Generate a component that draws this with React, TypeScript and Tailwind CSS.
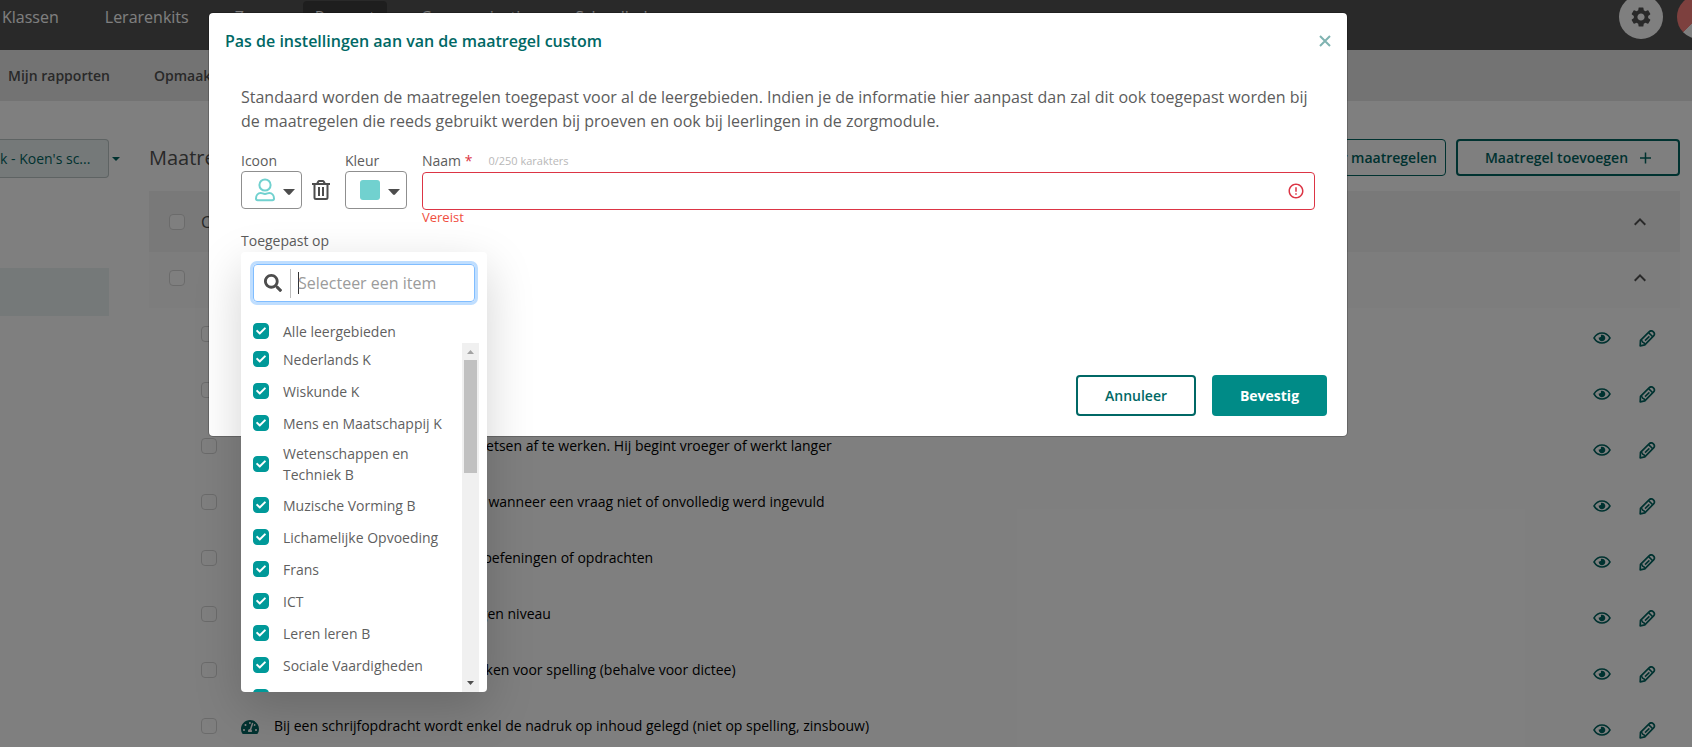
import { useState } from 'react'
import { FaCheck, FaSearch, FaTachometerAlt } from 'react-icons/fa'
import { MdErrorOutline, MdKeyboardArrowUp, MdSettings } from 'react-icons/md'

const navItems = ['Klassen', 'Lerarenkits', 'Zorg', 'Rapport', 'Communicatie', 'Schoolbeheer']

const measures = [
  'De leerling krijgt extra uitleg bij de opdracht',
  'De leerling mag hulpmiddelen gebruiken',
  'Zij krijgt extra tijd om taken of toetsen af te werken. Hij begint vroeger of werkt langer',
  'De leerling wordt er op gewezen wanneer een vraag niet of onvolledig werd ingevuld',
  'Een leerling krijgt minder zware oefeningen of opdrachten',
  'Een leerling werkt volledig op eigen niveau',
  'Er worden geen punten afgetrokken voor spelling (behalve voor dictee)',
  'Bij een schrijfopdracht wordt enkel de nadruk op inhoud gelegd (niet op spelling, zinsbouw)',
]

const subjects = [
  'Nederlands K',
  'Wiskunde K',
  'Mens en Maatschappij K',
  'Wetenschappen en Techniek B',
  'Muzische Vorming B',
  'Lichamelijke Opvoeding',
  'Frans',
  'ICT',
  'Leren leren B',
  'Sociale Vaardigheden',
  'Godsdienst',
]

function EyeIcon() {
  return (
    <svg width="18" height="12" viewBox="0 0 18 12" fill="none">
      <path d="M1 6C3 2.6 5.8 1 9 1s6 1.6 8 5c-2 3.4-4.8 5-8 5S3 9.4 1 6z" stroke="currentColor" strokeWidth="1.5" />
      <path d="M9 2.7a3.3 3.3 0 1 1-3.2 2.5c.9.5 2 .1 2.2-.9.1-.6 0-1.1-.3-1.3.4-.2.8-.3 1.3-.3z" fill="currentColor" />
    </svg>
  )
}

function PencilIcon() {
  return (
    <svg width="17" height="17" viewBox="0 0 17 17" fill="none" stroke="currentColor" strokeLinejoin="round">
      <path d="M1.2 15.8l.3-5.4 8.8-8.800c1.400-1.100 2.800-1.100 4.100.2s1.300 2.800.2 4.100l-8.800 8.900z" strokeWidth="1.7" />
      <path d="M9.600 2.600l4.400 4.400M2 10.600c1 .2 1.600.6 1.700 1.700 1.100.1 1.900.8 2.100 2M6 10.600l4.400-4.200" strokeWidth="1.5" />
    </svg>
  )
}

function UserIcon() {
  return (
    <svg width="20" height="24" viewBox="0 0 20 24" fill="none" stroke="#71d1cf" strokeWidth="2">
      <circle cx="10" cy="7" r="5.6" />
      <path d="M1 20.5c0-3 2-5.5 4.700-5.500 1.500 0 2.400.9 4.300.9s2.800-.9 4.300-.9C17 15 19 17.500 19 20.500c0 1-.7 1.700-1.700 1.700H2.700c-1 0-1.700-.7-1.700-1.700z" />
    </svg>
  )
}

function TrashIcon() {
  return (
    <svg width="18" height="20" viewBox="0 0 18 20" fill="none" stroke="#4d4d4d" strokeWidth="2">
      <path d="M0 4h18M2.5 4v13.500c0 1 .5 1.500 1.500 1.500h10c1 0 1.500-.5 1.500-1.500V4M5 4l1.300-2.500c.2-.3.4-.5.8-.5h3.800c.4 0 .6.2.8.5L13 4M7 7v9M11 7v9" />
    </svg>
  )
}

function Caret() {
  return (
    <svg width="12" height="6" viewBox="0 0 12 6" fill="#4d4d4d">
      <path d="M0 0h12L7 5.500c-.6.6-1.400.6-2 0z" />
    </svg>
  )
}

function Tick({ label }: { label: string }) {
  const [checked, setChecked] = useState(true)

  return (
    <label className="flex min-h-8 items-center gap-[14px] py-1 text-sm leading-[21px] text-[#5f5f5f]">
      <span className="grid size-4 shrink-0 place-items-center">
        <input
          type="checkbox"
          checked={checked}
          onChange={() => setChecked(!checked)}
          className="col-start-1 row-start-1 size-4 appearance-none rounded border border-[#009999] checked:bg-[#009999]"
        />
        <FaCheck className="pointer-events-none col-start-1 row-start-1 size-[10px] text-white" />
      </span>
      <span>{label}</span>
    </label>
  )
}

function EmptyBox({ label }: { label: string }) {
  return (
    <input
      type="checkbox"
      aria-label={label}
      className="size-4 shrink-0 appearance-none rounded border border-[#d6d6d6] bg-white"
    />
  )
}

function Page() {
  return (
    <div className="text-[#525252]">
      <header className="flex h-[50px] items-center justify-between bg-[#525252] pb-4">
        <nav className="flex items-center gap-[22px] text-base text-white">
          {navItems.map((item) => (
            <a
              key={item}
              href="#"
              className={item === 'Rapport' ? 'rounded bg-[#3c3c3c] px-3 py-1' : 'px-3 py-1 first:pl-[2px]'}
            >
              {item}
            </a>
          ))}
        </nav>
        <div className="-mr-[29px] flex items-center gap-[14px]">
          <button aria-label="Instellingen" className="grid size-11 place-items-center rounded-full bg-white">
            <MdSettings className="size-6" />
          </button>
          <div className="size-11 rounded-full bg-[linear-gradient(135deg,#fb807d_50%,#fff_50%)]" />
        </div>
      </header>

      <nav className="flex h-[51px] items-center gap-11 bg-[#e6e6e6] px-2 text-sm font-semibold">
        <a href="#">Mijn rapporten</a>
        <a href="#">Opmaak rapporten</a>
      </nav>

      <div className="flex pt-[38px]">
        <aside className="w-[149px] shrink-0">
          <div className="flex items-center gap-[3px]">
            <button className="h-[39px] w-[109px] rounded-r border border-l-0 border-[#bcc6c6] bg-[#eaf3f3] text-left text-sm whitespace-nowrap text-[#006460]">
              k - Koen's sc...
            </button>
            <svg width="8" height="4" viewBox="0 0 8 4" fill="#006460">
              <path d="M0 0h8L4 4z" />
            </svg>
          </div>
          <div className="mt-[90px] h-12 w-[109px] bg-[#eaf3f3]" />
        </aside>

        <main className="min-w-0 flex-1 pr-3">
          <div className="flex items-center gap-[10px]">
            <h1 className="flex-1 text-xl">Maatregelen</h1>
            <button className="h-[37px] rounded border border-[#006460] px-2 text-sm font-semibold text-[#006460]">
              Beheer maatregelen
            </button>
            <button className="flex h-[37px] w-[224px] items-center justify-center gap-3 rounded border-2 border-[#006460] text-sm font-semibold text-[#006460]">
              Maatregel toevoegen
              <svg width="11" height="12" viewBox="0 0 11 12" stroke="currentColor" strokeWidth="1.5">
                <path d="M0 6h11M5.500 0.500v11" />
              </svg>
            </button>
          </div>

          <div className="mt-[15px] flex h-[61px] items-center gap-4 bg-[#f3f3f3] pr-7 pl-5">
            <EmptyBox label="Custom" />
            <span className="flex-1 text-base">Custom</span>
            <MdKeyboardArrowUp className="size-6" />
          </div>
          <div className="flex h-14 items-center gap-4 bg-[#fafafa] pr-7 pb-1 pl-5">
            <EmptyBox label="Alles" />
            <span className="flex-1" />
            <MdKeyboardArrowUp className="size-6" />
          </div>
          <ul>
            {measures.map((measure) => (
              <li key={measure} className="flex h-14 items-center justify-between pr-6 pl-[52px]">
                <div className="flex items-center pb-1">
                  <EmptyBox label={measure} />
                  <FaTachometerAlt className="mt-[2px] ml-6 size-[18px] text-[#006460]" />
                  <span className="ml-[15px] text-sm text-black">{measure}</span>
                </div>
                <div className="flex items-center gap-7 pt-1 text-[#006460]">
                  <button aria-label="Bekijken">
                    <EyeIcon />
                  </button>
                  <button aria-label="Bewerken">
                    <PencilIcon />
                  </button>
                </div>
              </li>
            ))}
          </ul>
        </main>
      </div>
    </div>
  )
}

function SubjectDropdown() {
  return (
    <div className="absolute top-full left-0 mt-px flex h-[440px] w-[246px] flex-col overflow-hidden rounded bg-white pt-3 pl-3 shadow-[0_16px_48px_rgba(0,0,0,0.175)]">
      <div className="mr-3 flex h-[38px] shrink-0 items-center rounded border border-[#80bdff] pl-[10px] ring-3 ring-[#bfdeff]">
        <FaSearch className="size-[18px] shrink-0 text-[#4d4d4d]" />
        <span className="ml-2 h-[29px] w-px shrink-0 bg-[#bdbdbd]" />
        <span className="ml-[7px] h-[22px] w-px shrink-0 bg-[#333]" />
        <input
          type="text"
          aria-label="Selecteer een item"
          placeholder="Selecteer een item"
          className="-ml-px w-full min-w-0 text-base outline-none placeholder:text-[#9b9b9b]"
        />
      </div>
      <div className="mt-[13px] h-7 shrink-0">
        <Tick label="Alle leergebieden" />
      </div>
      <div className="mr-2 flex min-h-0 flex-1">
        <div className="flex-1 overflow-hidden pr-2">
          {subjects.map((subject) => (
            <Tick key={subject} label={subject} />
          ))}
        </div>
        <div className="flex w-[17px] flex-col items-center justify-between bg-[#f0f0f0] px-[2px]">
          <div className="flex w-full flex-col items-center">
            <svg width="17" height="17" viewBox="0 0 17 17" fill="#a3a3a3">
              <path d="M5 11h7L8.500 7z" />
            </svg>
            <div className="h-[113px] w-full bg-[#c1c1c1]" />
          </div>
          <svg width="17" height="17" viewBox="0 0 17 17" fill="#505050">
            <path d="M5 6h7L8.500 10z" />
          </svg>
        </div>
      </div>
    </div>
  )
}

function MeasureModal() {
  return (
    <div
      role="dialog"
      aria-labelledby="modal-title"
      className="mt-3 mr-[344px] ml-[208px] rounded-[5px] border border-black/20 bg-white bg-clip-padding text-[#5c5c5c]"
    >
      <div className="flex h-[55px] items-center justify-between px-4">
        <h2 id="modal-title" className="text-base font-semibold text-[#006865]">
          Pas de instellingen aan van de maatregel custom
        </h2>
        <button aria-label="Sluiten" className="text-[#7fb3b1]">
          <svg width="12" height="12" viewBox="0 0 12 12" stroke="currentColor" strokeWidth="2">
            <path d="M1 1l10 10M11 1L1 11" />
          </svg>
        </button>
      </div>

      <div className="px-8 pt-[17px]">
        <p className="text-base leading-6">
          Standaard worden de maatregelen toegepast voor al de leergebieden. Indien je de informatie hier aanpast dan
          zal dit ook toegepast worden bij de maatregelen die reeds gebruikt werden bij proeven en ook bij leerlingen in
          de zorgmodule.
        </p>

        <div className="mt-[17px] flex items-start text-sm leading-[21px]">
          <div>
            <label htmlFor="icon">Icoon</label>
            <button id="icon" className="flex h-[38px] w-[61px] items-center gap-2 rounded border border-[#8f8f8f] pl-[13px]">
              <UserIcon />
              <span className="pt-1">
                <Caret />
              </span>
            </button>
          </div>
          <button aria-label="Icoon verwijderen" className="mt-[21px] flex h-[38px] w-[43px] items-center pl-[10px]">
            <TrashIcon />
          </button>
          <div>
            <label htmlFor="color">Kleur</label>
            <button id="color" className="flex h-[38px] w-[62px] items-center gap-2 rounded border border-[#8f8f8f] pl-[14px]">
              <span className="size-5 rounded-[3px] bg-[#71d1cf]" />
              <span className="pt-1">
                <Caret />
              </span>
            </button>
          </div>
          <div className="ml-[15px] flex-1">
            <div className="flex items-center">
              <label htmlFor="name">
                Naam <span className="text-[#dc3545]">*</span>
              </label>
              <span className="ml-4 text-[11px] text-[#b8b8b8]">0/250 karakters</span>
            </div>
            <div className="mt-px flex h-[38px] items-center rounded border border-[#dc3545] pr-[9px]">
              <input id="name" type="text" className="h-full min-w-0 flex-1 px-3 text-base outline-none" />
              <MdErrorOutline className="size-[18px] text-[#dc3545]" />
            </div>
            <p className="text-[13px] leading-[14px] text-[#f04e3e]">Vereist</p>
          </div>
        </div>

        <div className="relative mt-[6px] text-sm leading-[21px]">
          <span>Toegepast op</span>
          <SubjectDropdown />
        </div>
      </div>

      <div className="flex justify-end gap-4 px-5 pt-[124px] pb-5 text-sm">
        <button className="h-[41px] w-[120px] rounded border-2 border-[#006865] font-semibold text-[#006865]">
          Annuleer
        </button>
        <button className="h-[41px] w-[115px] rounded bg-[#008b87] font-bold text-white">Bevestig</button>
      </div>
    </div>
  )
}

export default function App() {
  return (
    <div className="relative h-screen overflow-hidden bg-white font-['Open_Sans',sans-serif]">
      <Page />
      <div className="absolute inset-0 flow-root bg-black/50">
        <MeasureModal />
      </div>
    </div>
  )
}
